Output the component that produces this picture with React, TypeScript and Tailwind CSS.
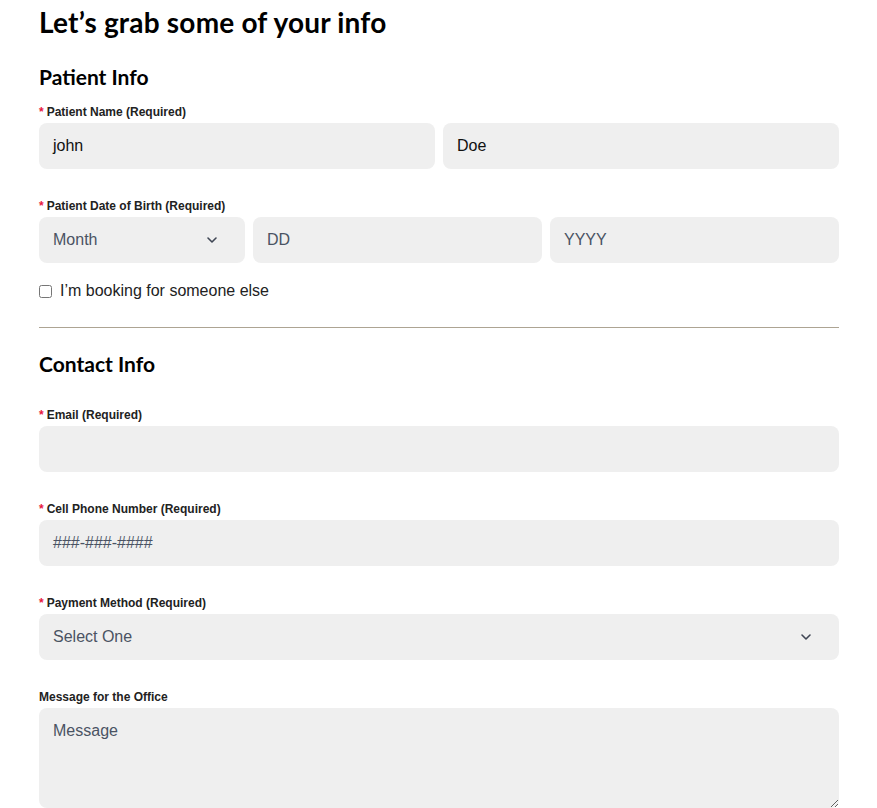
import React from 'react';

const heading = { fontFamily: 'Lato, "Noto Sans", sans-serif' };
const body = { fontFamily: '"Liberation Sans", Arial, sans-serif' };

const Chevron = () => (
  <svg width="12" height="8" viewBox="0 0 12 8" fill="none" className="shrink-0">
    <path d="M2 2 6 6l4-4" stroke="#3f4654" strokeWidth="1.6" strokeLinecap="round" strokeLinejoin="round" />
  </svg>
);

const Label = ({ text, required = true }: { text: string; required?: boolean }) => (
  <div className="text-[12px] leading-[16px] font-bold text-[#222] mb-[3px]">
    {required && <span className="text-[#e8173e] mr-[3px]">*</span>}
    {text}
  </div>
);

const Field = ({ value, placeholder, className = '' }: { value?: string; placeholder?: string; className?: string }) => (
  <div
    className={`h-[46px] rounded-[8px] bg-[#efefef] px-[14px] flex items-center text-[16px] ${
      value ? 'text-[#111]' : 'text-[#4a5363]'
    } ${className}`}
  >
    {value ?? placeholder}
  </div>
);

const Select = ({ placeholder, className = '' }: { placeholder: string; className?: string }) => (
  <div
    className={`h-[46px] rounded-[8px] bg-[#efefef] pl-[14px] pr-[27px] flex items-center justify-between text-[16px] text-[#4a5363] ${className}`}
  >
    <span>{placeholder}</span>
    <Chevron />
  </div>
);

const App = () => {
  return (
    <div className="bg-white min-h-[808px] overflow-hidden" style={body}>
      <div className="ml-[39px] w-[800px] pt-[5px]">
        <h1 className="text-[28px] leading-[34px] font-bold tracking-[0.2px] text-black" style={heading}>
          Let’s grab some of your info
        </h1>

        <h2 className="mt-[25px] text-[21px] leading-[26px] font-bold text-black" style={heading}>
          Patient Info
        </h2>

        <div className="mt-[14px]">
          <Label text="Patient Name (Required)" />
          <div className="flex gap-[8px]">
            <Field value="john" className="flex-1" />
            <Field value="Doe" className="flex-1" />
          </div>
        </div>

        <div className="mt-[29px]">
          <Label text="Patient Date of Birth (Required)" />
          <div className="flex gap-[8px]">
            <Select placeholder="Month" className="w-[206px]" />
            <Field placeholder="DD" className="flex-1" />
            <Field placeholder="YYYY" className="flex-1" />
          </div>
        </div>

        <label className="mt-[16px] flex items-center h-[24px] text-[16px] text-[#222]">
          <input type="checkbox" className="w-[13px] h-[13px] m-0 mr-[8px]" />
          I’m booking for someone else
        </label>

        <div className="mt-[24px] h-px bg-[#ada493]" />

        <h2 className="mt-[23px] text-[21px] leading-[26px] font-bold text-black" style={heading}>
          Contact Info
        </h2>

        <div className="mt-[30px]">
          <Label text="Email (Required)" />
          <Field placeholder="" />
        </div>

        <div className="mt-[29px]">
          <Label text="Cell Phone Number (Required)" />
          <Field placeholder="###-###-####" />
        </div>

        <div className="mt-[29px]">
          <Label text="Payment Method (Required)" />
          <Select placeholder="Select One" />
        </div>

        <div className="mt-[29px]">
          <Label text="Message for the Office" required={false} />
          <textarea
            placeholder="Message"
            className="block w-full h-[100px] rounded-[8px] bg-[#efefef] px-[14px] pt-[13px] pb-[12px] text-[16px] leading-[20px] text-[#111] placeholder:text-[#4a5363] outline-none"
          />
        </div>
      </div>
    </div>
  );
};

export default App;
